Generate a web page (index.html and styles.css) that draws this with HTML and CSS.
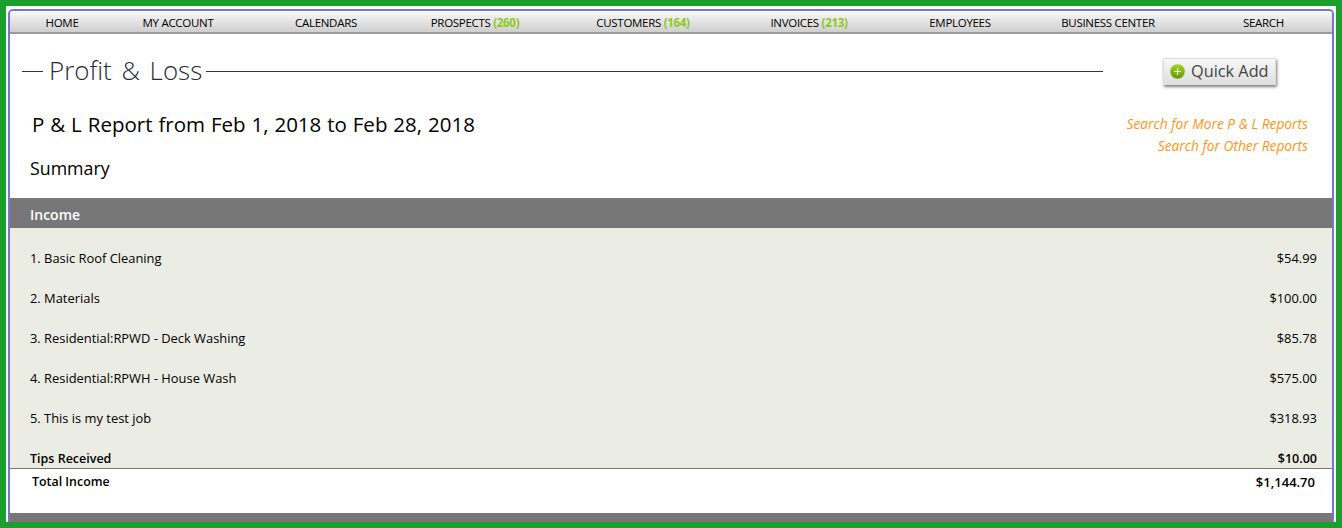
FILE: index.html
```html
<!DOCTYPE html>
<html lang="en">
<head>
  <meta charset="UTF-8">
  <title>Profit &amp; Loss</title>
  <link rel="stylesheet" href="styles.css">
</head>
<body>
  <div class="frame">
    <div class="container">
      <nav class="topnav">
        <a>HOME</a>
        <a>MY ACCOUNT</a>
        <a>CALENDARS</a>
        <a>PROSPECTS <span class="count">(260)</span></a>
        <a>CUSTOMERS <span class="count">(164)</span></a>
        <a>INVOICES <span class="count">(213)</span></a>
        <a>EMPLOYEES</a>
        <a>BUSINESS CENTER</a>
        <a class="last">SEARCH</a>
      </nav>

      <div class="title-row">
        <div class="title-rule">
          <h1>Profit &amp; Loss</h1>
        </div>
        <button class="quick-add">
          <svg width="15" height="15" viewBox="0 0 16 16">
            <defs>
              <linearGradient id="plusFill" x1="0" y1="0" x2="0" y2="1">
                <stop offset="0" stop-color="#a4d41c"/>
                <stop offset="1" stop-color="#5f9a08"/>
              </linearGradient>
            </defs>
            <circle cx="8" cy="8" r="7.8" fill="url(#plusFill)"/>
            <path d="M8 4.5v7M4.5 8h7" stroke="#fff" stroke-width="1.2"/>
          </svg>
          Quick Add
        </button>
      </div>

      <div class="report-head">
        <div>
          <h2>P &amp; L Report from Feb 1, 2018 to Feb 28, 2018</h2>
          <h3>Summary</h3>
        </div>
        <div class="report-links">
          <a>Search for More P &amp; L Reports</a>
          <a>Search for Other Reports</a>
        </div>
      </div>

      <div class="section-bar">Income</div>
      <div class="rows">
        <div class="row"><span>1. Basic Roof Cleaning</span><span>$54.99</span></div>
        <div class="row"><span>2. Materials</span><span>$100.00</span></div>
        <div class="row"><span>3. Residential:RPWD - Deck Washing</span><span>$85.78</span></div>
        <div class="row"><span>4. Residential:RPWH - House Wash</span><span>$575.00</span></div>
        <div class="row"><span>5. This is my test job</span><span>$318.93</span></div>
        <div class="row tips"><span>Tips Received</span><span>$10.00</span></div>
      </div>
      <div class="total"><span>Total Income</span><span class="total-amount">$1,144.70</span></div>
      <div class="section-bar next"></div>
    </div>
  </div>
</body>
</html>
```

FILE: styles.css
```css
html, body {
  height: 100%;
}

body {
  margin: 0;
  overflow: hidden;
  font-family: 'Open Sans', sans-serif;
  color: #000;
  background: #1a9f2d;
}

.frame {
  height: 516px;
  margin: 6px 6px 0;
  padding: 3px 2px 0;
  background: #fff;
  overflow: hidden;
  box-sizing: border-box;
}

.container {
  height: 513px;
  border: 2px solid #7676d0;
  border-bottom: none;
  border-radius: 5px 5px 0 0;
  background: #fff;
  overflow: hidden;
  box-sizing: border-box;
}

.topnav {
  display: grid;
  grid-template-columns: 104px 128px 168px 130px 206px 126px 176px 120px 164px;
  height: 20px;
  padding-top: 1px;
  align-items: center;
  background: linear-gradient(#f9f9f9, #cfcfcf);
  border-bottom: 2px solid #999;
  font-size: 11.5px;
  letter-spacing: -0.3px;
  text-align: center;
}

.topnav .last {
  padding-left: 27px;
}

.count {
  color: #8cc81e;
  font-weight: 700;
}

.title-row {
  display: flex;
  align-items: center;
  height: 74px;
  padding-left: 12px;
}

.title-rule {
  display: flex;
  align-items: center;
  width: 1081px;
}

.title-rule::before {
  content: "";
  width: 21px;
  border-top: 1px solid #333;
}

.title-rule::after {
  content: "";
  flex: 1;
  border-top: 1px solid #333;
}

h1 {
  margin: -2px 4px 0 6px;
  font-size: 25.9px;
  font-weight: 300;
  color: #2a2a38;
  word-spacing: 3px;
  white-space: nowrap;
}

.quick-add {
  display: flex;
  align-items: center;
  gap: 6px;
  width: 113px;
  height: 27px;
  margin-left: 60px;
  padding: 0 0 0 6px;
  border: 1px solid #ddd;
  border-radius: 1px;
  background: linear-gradient(#f8f8f8, #dedede);
  box-shadow: 1px 2px 3px rgba(0, 0, 0, 0.5);
  font-family: inherit;
  font-size: 16.3px;
  color: #444;
}

.report-head {
  display: flex;
  justify-content: space-between;
  height: 90px;
  padding: 0 24px 0 20px;
}

h2 {
  margin: 0 0 0 2px;
  padding-top: 2px;
  font-size: 20.5px;
  font-weight: 400;
  word-spacing: 0.6px;
  line-height: 28px;
}

h3 {
  margin: 16px 0 0;
  font-size: 17.8px;
  font-weight: 400;
  line-height: 28px;
}

.report-links {
  display: flex;
  flex-direction: column;
  align-items: flex-end;
  padding-top: 5px;
  font-size: 13.75px;
  font-style: italic;
  line-height: 22px;
  color: #ff9412;
}

.section-bar {
  height: 30px;
  padding-left: 20px;
  background: #777;
  color: #fff;
  font-size: 14px;
  font-weight: 600;
  line-height: 33px;
}

.rows {
  height: 240px;
  padding-top: 10px;
  box-sizing: border-box;
  background: #ebece4;
}

.row {
  display: flex;
  justify-content: space-between;
  height: 40px;
  padding: 0 15px 0 20px;
  font-size: 12.9px;
  line-height: 40px;
}

.row.tips {
  font-size: 12.5px;
  font-weight: 600;
  line-height: 42px;
}

.total {
  display: flex;
  justify-content: space-between;
  height: 45px;
  padding: 4px 17px 0 22px;
  box-sizing: border-box;
  border-top: 1px solid #777;
  font-size: 12.4px;
  font-weight: 600;
  line-height: 18px;
}

.total-amount {
  font-size: 13px;
}

.section-bar.next {
  height: 20px;
}
```
